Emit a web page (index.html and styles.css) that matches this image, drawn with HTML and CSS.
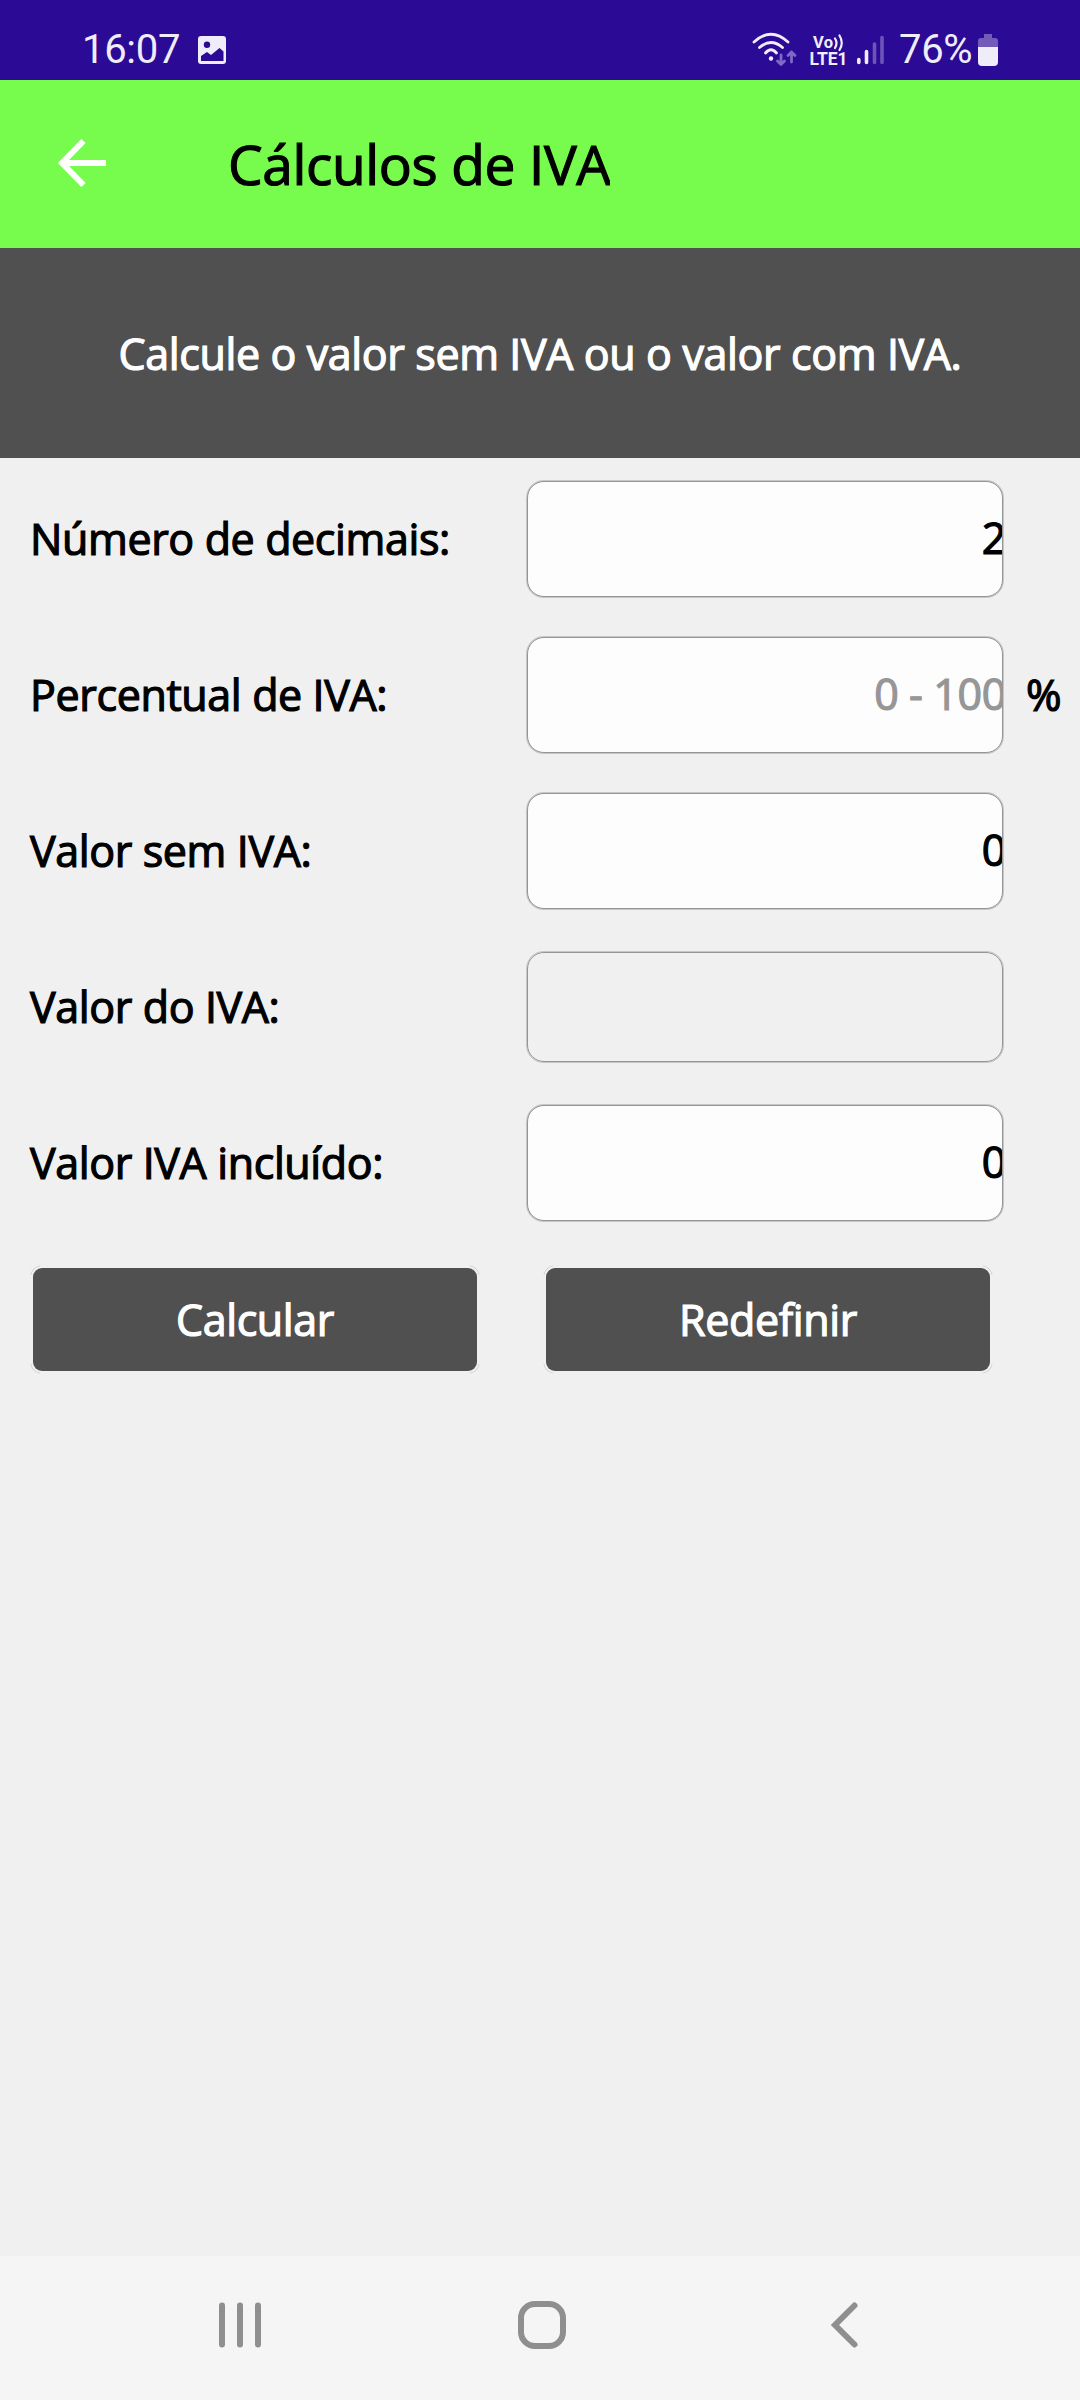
FILE: index.html
```
<!DOCTYPE html>
<html lang="pt">
<head>
<meta charset="utf-8">
<title>Cálculos de IVA</title>
<link rel="stylesheet" href="styles.css">
</head>
<body>
<div class="screen">
  <div class="status">
    <span class="clock">16:07</span>
    <svg class="photo" width="28" height="28" viewBox="0 0 28 28"><path fill="#f0edfa" fill-rule="evenodd" d="M3 0H25Q28 0 28 3V25Q28 28 25 28H3Q0 28 0 25V3Q0 0 3 0ZM9 5.5A3.2 3.2 0 1 0 9 11.9A3.2 3.2 0 1 0 9 5.5ZM3 20V25H25.500V15.500L21.500 12L13 19L9 16Z"/></svg>
    <svg class="signals" width="140" height="40" viewBox="0 0 140 40">
      <g fill="none" stroke="#f0edfa" stroke-width="2.8" stroke-linecap="round"><path d="M2 14Q19-1.500 36 14M7.500 19.500Q19 9.500 30.500 19.500M13.500 25Q19 18.500 24.500 25"/></g>
      <circle cx="19" cy="30.500" r="2.200" fill="#f0edfa"/>
      <g fill="none" stroke="#8069c5" stroke-width="2.800" stroke-linecap="round" stroke-linejoin="round"><path d="M29 27V36M25.500 33L29 36.500L32.500 33M39.500 34V24M36 27.500L39.500 24L43 27.500"/></g>
      <g fill="#f0edfa" font-family="Roboto, sans-serif" font-weight="700"><text x="61" y="20" font-size="16.500" textLength="20">Vo</text><text x="57.500" y="37" font-size="17.500" textLength="38">LTE1</text></g>
      <g fill="none" stroke="#f0edfa" stroke-width="2.200" stroke-linecap="round"><path d="M83 10.500Q86 15 83 20M87.500 7.500Q92 15 87.500 22"/></g>
      <g stroke-width="3.600" stroke-linecap="round"><path stroke="#f0edfa" d="M106.800 31.500V34.500M114.500 23.500V34.500"/><path stroke="#6d55b8" d="M122.500 16V34.500M130 9.500V34.500"/></g>
    </svg>
    <span class="percent">76%</span>
    <svg class="battery" width="20" height="32" viewBox="0 0 20 32"><path fill="#735bba" d="M6 0H14V4H17Q20 4 20 7V14H0V7Q0 4 3 4H6Z"/><path fill="#f0edfa" d="M0 13H20V28Q20 32 16 32H4Q0 32 0 28Z"/></svg>
  </div>
  <header class="appbar">
    <svg class="back" width="50" height="50" viewBox="0 0 50 50"><path fill="none" stroke="#fff" stroke-width="6" d="M26.500 3L5 25L26.500 47M5 25H49"/></svg>
    <h1 class="title">Cálculos de IVA</h1>
  </header>
  <p class="intro">Calcule o valor sem IVA ou o valor com IVA.</p>
  <main class="form">
    <div class="row"><label>Número de decimais:</label><div class="field"><span>2</span></div></div>
    <div class="row"><label>Percentual de IVA:</label><div class="field hint"><span>0 - 100</span></div><span class="unit">%</span></div>
    <div class="row"><label>Valor sem IVA:</label><div class="field"><span>0</span></div></div>
    <div class="row"><label>Valor do IVA:</label><div class="field readonly"></div></div>
    <div class="row"><label>Valor IVA incluído:</label><div class="field"><span>0</span></div></div>
    <div class="actions"><button>Calcular</button><button>Redefinir</button></div>
  </main>
  <nav class="navbar">
    <svg width="48" height="48" viewBox="0 0 48 48"><path stroke="#8f8f8f" stroke-width="6" stroke-linecap="round" d="M6 4.500V43.500M24 4.500V43.500M42 4.500V43.500"/></svg>
    <svg width="48" height="48" viewBox="0 0 48 48"><rect x="3" y="3" width="42" height="42" rx="14" fill="none" stroke="#8f8f8f" stroke-width="6"/></svg>
    <svg width="48" height="48" viewBox="0 0 48 48"><path fill="none" stroke="#8f8f8f" stroke-width="6" stroke-linecap="round" d="M34.500 4.500L15 24L34.500 43.500"/></svg>
  </nav>
</div>
</body>
</html>
```
FILE: styles.css
```
* { box-sizing: border-box; }
body { margin: 0; }
.screen {
  width: 1080px;
  height: 2400px;
  display: flex;
  flex-direction: column;
  overflow: hidden;
  background: #f0f0f0;
  color: #000;
  font-family: "Open Sans", "Noto Sans", sans-serif;
  font-size: 43px;
  line-height: 60px;
  letter-spacing: -0.38px;
  -webkit-text-stroke: 1.2px currentColor;
}
.status {
  height: 80px;
  flex: none;
  display: flex;
  padding-left: 82px;
  background: #2b0a96;
  color: #f0edfa;
  font-family: Roboto, sans-serif;
  font-size: 40px;
  line-height: 48px;
  letter-spacing: -0.3px;
  -webkit-text-stroke: 0;
}
.status svg { flex: none; letter-spacing: 0; }
.clock { width: 116px; padding-top: 26px; }
.photo { margin-top: 36px; }
.signals { margin: 28px 0 0 526px; }
.percent { width: 86px; padding: 26px 0 0 7px; }
.battery { margin-top: 34px; }
.appbar {
  height: 168px;
  flex: none;
  display: flex;
  align-items: center;
  background: #77fc4e;
}
.back { margin: 0 0 2px 57px; }
.title {
  width: 382px;
  margin: 0 0 0 121px;
  overflow: hidden;
  white-space: nowrap;
  font-size: 55px;
  font-weight: 400;
  line-height: 80px;
}
.intro {
  height: 210px;
  flex: none;
  display: flex;
  align-items: center;
  justify-content: center;
  margin: 0;
  padding-top: 1px;
  background: #505050;
  color: #fff;
  white-space: nowrap;
}
.form { flex: 1; padding-top: 3px; }
.row {
  height: 156px;
  display: flex;
  align-items: center;
  padding-left: 30px;
}
.row label { width: 497px; white-space: nowrap; }
.field {
  width: 476px;
  height: 116px;
  display: flex;
  align-items: center;
  justify-content: flex-end;
  overflow: hidden;
  border: 1px solid #969696;
  border-radius: 17px;
  box-shadow: 0 0 0 1px #c6c6c6;
  background: #fdfdfd;
}
.field span { margin: 0 -4px 2px 0; white-space: nowrap; }
.hint { color: #969696; }
.readonly { height: 110px; background: transparent; }
.unit { margin-left: 23px; }
.actions { display: flex; gap: 69px; padding: 27px 33px; }
.actions button {
  position: relative;
  width: 444px;
  height: 103px;
  padding: 0;
  border: 0;
  border-radius: 9px;
  background: #505050;
  color: #fff;
  font: inherit;
  letter-spacing: inherit;
  -webkit-text-stroke: inherit;
}
/* hairline arcs just outside the button corners */
.actions button::before {
  content: "";
  position: absolute;
  inset: -3px;
  border: 1px solid #cfcfcf;
  border-radius: 12px;
  mask:
    linear-gradient(90deg, #000 10px, transparent 10px calc(100% - 10px), #000 calc(100% - 10px)) intersect,
    linear-gradient(#000 10px, transparent 10px calc(100% - 10px), #000 calc(100% - 10px));
}
.navbar {
  height: 144px;
  flex: none;
  display: flex;
  align-items: center;
  padding: 0 0 6px 216px;
  gap: 254px;
  background: #f5f5f5;
}
```
